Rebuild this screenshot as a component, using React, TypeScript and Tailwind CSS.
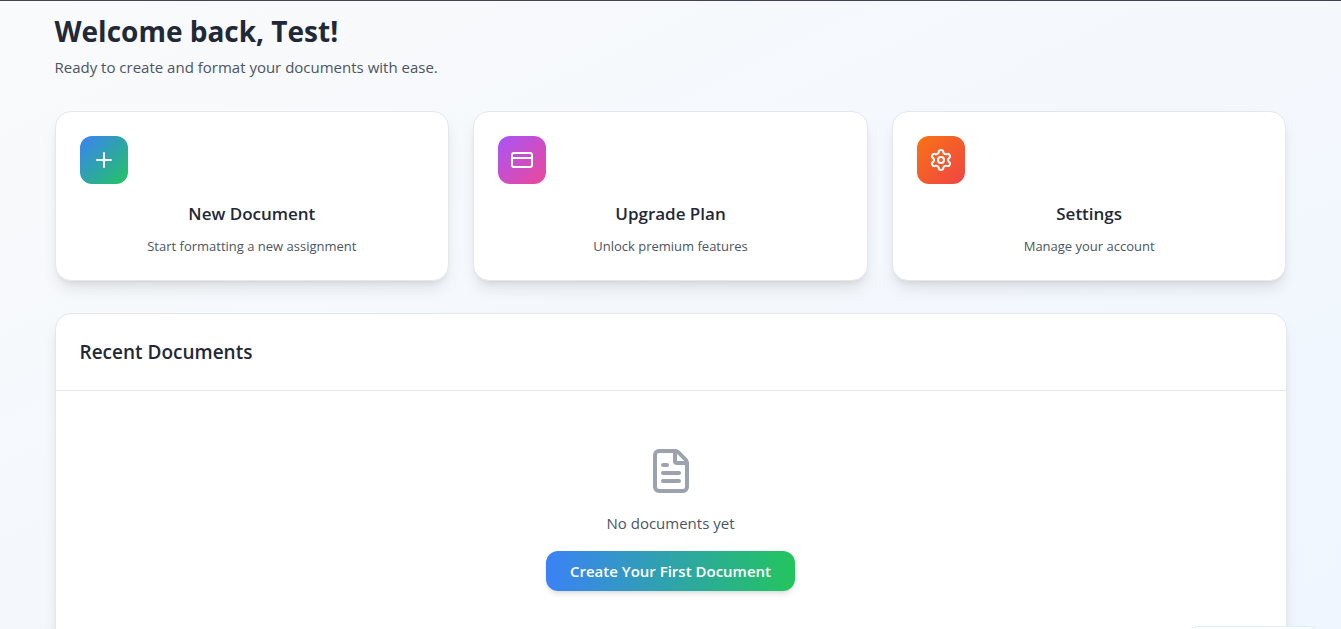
import { CreditCard, FileText, Plus, Settings } from 'lucide-react';
import type { LucideIcon } from 'lucide-react';

type Action = {
  title: string;
  description: string;
  icon: LucideIcon;
  gradient: string;
};

const actions: Action[] = [
  {
    title: 'New Document',
    description: 'Start formatting a new assignment',
    icon: Plus,
    gradient: 'from-[#3b82f6] to-[#22c55e]',
  },
  {
    title: 'Upgrade Plan',
    description: 'Unlock premium features',
    icon: CreditCard,
    gradient: 'from-[#a855f7] to-[#ec4899]',
  },
  {
    title: 'Settings',
    description: 'Manage your account',
    icon: Settings,
    gradient: 'from-[#f97316] to-[#ef4444]',
  },
];

function ActionCard({ title, description, icon: Icon, gradient }: Action) {
  return (
    <button
      type="button"
      className="rounded-2xl border border-[#e5e7eb] bg-white p-6 shadow-lg"
    >
      <span
        className={`mb-4 flex size-12 items-center justify-center rounded-xl bg-linear-to-br/srgb ${gradient}`}
      >
        <Icon className="size-6 text-white" aria-hidden="true" />
      </span>
      <span className="mb-2 block text-[17px] leading-7 font-semibold text-[#1f2937]">{title}</span>
      <span className="block text-[13px] leading-5 text-[#4b5563]">{description}</span>
    </button>
  );
}

export default function App() {
  return (
    <div className="relative h-screen overflow-hidden border-t border-[#45424f] bg-linear-to-br/srgb from-[#f9fafb] to-[#eff6ff] font-['Open_Sans','Noto_Sans',sans-serif]">
      <main className="mx-auto max-w-7xl px-6 pt-3">
        <header className="mb-8">
          <h1 className="mb-1.5 text-[28px] leading-9 font-bold text-[#1f2937]">Welcome back, Test!</h1>
          <p className="text-[15px] leading-6 text-[#4b5563]">
            Ready to create and format your documents with ease.
          </p>
        </header>

        <div className="mb-8 grid grid-cols-1 gap-6 md:grid-cols-3">
          {actions.map((action) => (
            <ActionCard key={action.title} {...action} />
          ))}
        </div>

        <section className="rounded-2xl border border-[#e5e7eb] bg-white shadow-lg">
          <div className="border-b border-[#e5e7eb] p-6">
            <h2 className="text-[19px] leading-7 font-semibold text-[#1f2937]">Recent Documents</h2>
          </div>
          <div className="p-6">
            <div className="flex flex-col items-center py-8">
              <FileText className="mb-4 size-12 text-[#9ca3af]" aria-hidden="true" />
              <p className="mb-4 text-[15px] leading-6 text-[#4b5563]">No documents yet</p>
              <button
                type="button"
                className="rounded-xl bg-linear-to-r/srgb from-[#3b82f6] to-[#22c55e] px-6 py-2 text-[15px] leading-6 font-semibold text-white shadow-md"
              >
                Create Your First Document
              </button>
            </div>
          </div>
        </section>
      </main>

      <div className="absolute right-6 -bottom-10 h-[43px] w-32 rounded-lg border border-[#dbeefe] bg-white" />
    </div>
  );
}
